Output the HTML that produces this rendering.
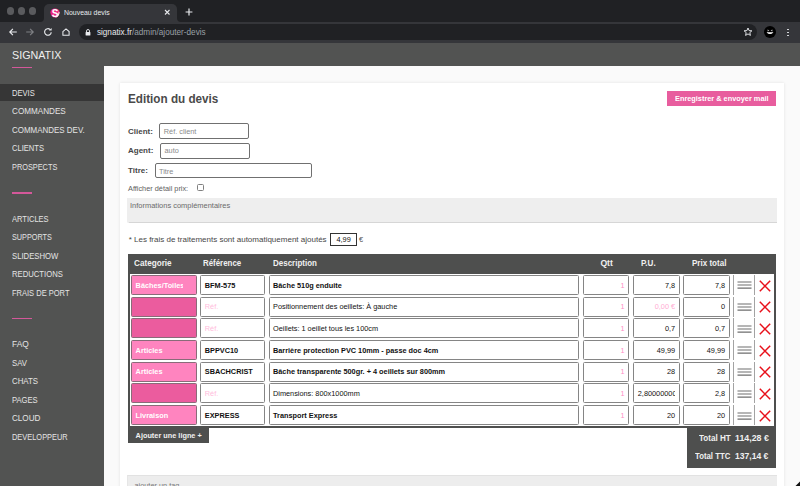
<!DOCTYPE html>
<html><head><meta charset="utf-8">
<style>
*{margin:0;padding:0;box-sizing:border-box}
html,body{width:800px;height:486px;overflow:hidden;background:#fafafa;font-family:"Liberation Sans",sans-serif}
.a{position:absolute;white-space:nowrap}
.r{position:absolute}
</style></head><body>
<div class="r" style="left:0.00px;top:0.00px;width:800.00px;height:21.70px;background:#202124"></div>
<div class="r" style="left:6.80px;top:7.20px;width:7.40px;height:7.40px;background:#5a5b5e;border-radius:50%"></div>
<div class="r" style="left:17.90px;top:7.20px;width:7.40px;height:7.40px;background:#5a5b5e;border-radius:50%"></div>
<div class="r" style="left:29.00px;top:7.20px;width:7.40px;height:7.40px;background:#5a5b5e;border-radius:50%"></div>
<div class="r" style="left:0.00px;top:21.70px;width:800.00px;height:21.10px;background:#35363a"></div>
<div class="r" style="left:44.00px;top:3.60px;width:132.60px;height:18.40px;background:#35363a;border-radius:5px 5px 0 0"></div>
<div class="r" style="left:40.00px;top:17.00px;width:4.00px;height:4.70px;background:#35363a"></div>
<div class="r" style="left:39.00px;top:13.00px;width:5.00px;height:8.70px;background:#202124;border-radius:0 0 4px 0"></div>
<div class="r" style="left:176.60px;top:17.00px;width:4.40px;height:4.70px;background:#35363a"></div>
<div class="r" style="left:176.60px;top:13.00px;width:5.40px;height:8.70px;background:#202124;border-radius:0 0 0 4px"></div>
<svg class="r" style="left:49.5px;top:7.6px" width="10" height="10" viewBox="0 0 10 10"><path d="M5 0.4C7.6 0.4 9.6 1.6 9.6 4.2C9.6 7.2 7.4 9.6 5 9.6C2.6 9.6 0.4 7.2 0.4 4.2C0.4 1.6 2.4 0.4 5 0.4Z" fill="#e8237f"/><path d="M9.6 4.2C9.6 7.2 7.4 9.6 5 9.6C6.8 8.6 8.4 6.6 8.6 3.4Z" fill="#fbe3ee"/><text x="5.1" y="8.6" font-family="Liberation Sans" font-weight="bold" font-size="10" fill="#fff" text-anchor="middle">S</text></svg>
<div class="a" style="left:63.50px;top:9px;font-size:7.1px;line-height:9.23px;color:#e8eaed;transform:scaleX(0.975);transform-origin:0 0;">Nouveau devis</div>
<svg class="r" style="left:163.8px;top:9.4px" width="6.5" height="6.5" viewBox="0 0 6.5 6.5"><path d="M1 1L5.5 5.5M5.5 1L1 5.5" stroke="#e8eaed" stroke-width="1.1"/></svg>
<svg class="r" style="left:184.6px;top:8.4px" width="8" height="8" viewBox="0 0 8 8"><path d="M4 0.6V7.4M0.6 4H7.4" stroke="#e8eaed" stroke-width="1.2"/></svg>
<svg class="r" style="left:7.5px;top:27px" width="10" height="10" viewBox="0 0 10 10"><path d="M8.8 5H2M4.9 1.9L1.8 5L4.9 8.1" stroke="#e8eaed" stroke-width="1.15" fill="none"/></svg>
<svg class="r" style="left:25px;top:27px" width="10" height="10" viewBox="0 0 10 10"><path d="M1.2 5H8M5.1 1.9L8.2 5L5.1 8.1" stroke="#7f8084" stroke-width="1.15" fill="none"/></svg>
<svg class="r" style="left:42.5px;top:27.3px" width="10" height="10" viewBox="0 0 10 10"><path d="M8.2 5.2A3.3 3.3 0 1 1 7.2 2.6" stroke="#e8eaed" stroke-width="1.15" fill="none"/><path d="M8.6 0.9V3.6H5.9Z" fill="#e8eaed"/></svg>
<svg class="r" style="left:60.6px;top:27.2px" width="10" height="10" viewBox="0 0 10 10"><path d="M1.9 4.6L5 1.9L8.1 4.6V8.3H1.9Z" stroke="#e8eaed" stroke-width="1.05" fill="none" stroke-linejoin="miter"/></svg>
<div class="r" style="left:79.00px;top:24.40px;width:678.00px;height:15.30px;background:#202124;border-radius:8px"></div>
<svg class="r" style="left:85px;top:28.8px" width="6" height="7" viewBox="0 0 6 7"><path d="M1.5 3V2A1.5 1.5 0 0 1 4.5 2V3" stroke="#e8eaed" stroke-width="0.9" fill="none"/><rect x="0.6" y="3" width="4.8" height="3.6" rx="0.5" fill="#e8eaed"/></svg>
<div class="a" style="left:96.90px;top:28px;font-size:8.2px;line-height:10.66px;color:#e8eaed;">signatix.fr<span style="color:#9aa0a6">/admin/ajouter-devis</span></div>
<svg class="r" style="left:742.8px;top:27.3px" width="10" height="10" viewBox="0 0 10 10"><path d="M5 1L6.1 3.6L8.9 3.8L6.8 5.6L7.4 8.4L5 6.9L2.6 8.4L3.2 5.6L1.1 3.8L3.9 3.6Z" stroke="#e8eaed" stroke-width="0.95" fill="none" stroke-linejoin="round"/></svg>
<svg class="r" style="left:764px;top:26.3px" width="12" height="12" viewBox="0 0 12 12"><circle cx="6" cy="6" r="6" fill="#000"/><path d="M2.6 6.6Q6 9.6 9.4 6.6L9 6.2H3Z" fill="#fff"/><path d="M3.6 3.6L5.4 4.6L3.6 5.4Z M8.4 3.6L6.6 4.6L8.4 5.4Z" fill="#bbb"/></svg>
<div class="r" style="left:787.00px;top:28.55px;width:1.60px;height:1.50px;background:#e8eaed;border-radius:50%"></div>
<div class="r" style="left:787.00px;top:31.65px;width:1.60px;height:1.50px;background:#e8eaed;border-radius:50%"></div>
<div class="r" style="left:787.00px;top:34.75px;width:1.60px;height:1.50px;background:#e8eaed;border-radius:50%"></div>
<div class="r" style="left:0.00px;top:42.80px;width:104.00px;height:443.20px;background:#525352"></div>
<div class="r" style="left:104.00px;top:42.80px;width:696.00px;height:23.60px;background:#525352"></div>
<div class="a" style="left:11.60px;top:48px;font-size:11.2px;line-height:14.56px;color:#efefef;transform:scaleX(0.960);transform-origin:0 0;">SIGNATIX</div>
<div class="r" style="left:11.90px;top:66.50px;width:20.10px;height:1.60px;background:#d4589a"></div>
<div class="r" style="left:0.00px;top:83.80px;width:104.00px;height:17.70px;background:#363636"></div>
<div class="a" style="left:11.80px;top:88px;font-size:8.67px;line-height:11.27px;color:#e4e4e4;transform:scaleX(0.874);transform-origin:0 0;">DEVIS</div>
<div class="a" style="left:11.80px;top:106px;font-size:8.67px;line-height:11.27px;color:#e4e4e4;transform:scaleX(0.940);transform-origin:0 0;">COMMANDES</div>
<div class="a" style="left:11.80px;top:125px;font-size:8.67px;line-height:11.27px;color:#e4e4e4;transform:scaleX(0.920);transform-origin:0 0;">COMMANDES DEV.</div>
<div class="a" style="left:11.80px;top:143px;font-size:8.67px;line-height:11.27px;color:#e4e4e4;transform:scaleX(0.875);transform-origin:0 0;">CLIENTS</div>
<div class="a" style="left:11.80px;top:162px;font-size:8.67px;line-height:11.27px;color:#e4e4e4;transform:scaleX(0.848);transform-origin:0 0;">PROSPECTS</div>
<div class="a" style="left:11.80px;top:214px;font-size:8.67px;line-height:11.27px;color:#e4e4e4;transform:scaleX(0.868);transform-origin:0 0;">ARTICLES</div>
<div class="a" style="left:11.80px;top:232px;font-size:8.67px;line-height:11.27px;color:#e4e4e4;transform:scaleX(0.838);transform-origin:0 0;">SUPPORTS</div>
<div class="a" style="left:11.80px;top:251px;font-size:8.67px;line-height:11.27px;color:#e4e4e4;transform:scaleX(0.893);transform-origin:0 0;">SLIDESHOW</div>
<div class="a" style="left:11.80px;top:269px;font-size:8.67px;line-height:11.27px;color:#e4e4e4;transform:scaleX(0.888);transform-origin:0 0;">REDUCTIONS</div>
<div class="a" style="left:11.80px;top:288px;font-size:8.67px;line-height:11.27px;color:#e4e4e4;transform:scaleX(0.868);transform-origin:0 0;">FRAIS DE PORT</div>
<div class="a" style="left:11.80px;top:339px;font-size:8.67px;line-height:11.27px;color:#e4e4e4;transform:scaleX(0.969);transform-origin:0 0;">FAQ</div>
<div class="a" style="left:11.80px;top:358px;font-size:8.67px;line-height:11.27px;color:#e4e4e4;transform:scaleX(0.899);transform-origin:0 0;">SAV</div>
<div class="a" style="left:11.80px;top:376px;font-size:8.67px;line-height:11.27px;color:#e4e4e4;transform:scaleX(0.909);transform-origin:0 0;">CHATS</div>
<div class="a" style="left:11.80px;top:395px;font-size:8.67px;line-height:11.27px;color:#e4e4e4;transform:scaleX(0.880);transform-origin:0 0;">PAGES</div>
<div class="a" style="left:11.80px;top:413px;font-size:8.67px;line-height:11.27px;color:#e4e4e4;transform:scaleX(0.937);transform-origin:0 0;">CLOUD</div>
<div class="a" style="left:11.80px;top:432px;font-size:8.67px;line-height:11.27px;color:#e4e4e4;transform:scaleX(0.858);transform-origin:0 0;">DEVELOPPEUR</div>
<div class="r" style="left:11.90px;top:192.10px;width:20.10px;height:1.60px;background:#d4589a"></div>
<div class="r" style="left:11.90px;top:317.80px;width:20.10px;height:1.60px;background:#d4589a"></div>
<div class="r" style="left:120.00px;top:82.70px;width:664.40px;height:417.30px;background:#fff;box-shadow:0 0 3px rgba(0,0,0,0.10)"></div>
<div class="a" style="left:128.10px;top:92px;font-size:12px;line-height:15.6px;color:#4a4a4a;font-weight:bold;transform:scaleX(0.975);transform-origin:0 0;">Edition du devis</div>
<div class="r" style="left:666.80px;top:90.50px;width:109.20px;height:15.80px;background:#e85d9e"></div>
<div class="a" style="left:674.60px;top:94px;font-size:7.5px;line-height:9.75px;color:#ffffff;font-weight:bold;transform:scaleX(0.980);transform-origin:0 0;">Enregistrer &amp; envoyer mail</div>
<div class="a" style="left:128.00px;top:127px;font-size:8px;line-height:10.4px;color:#474747;font-weight:bold;">Client:</div>
<div class="r" style="left:159.40px;top:123.20px;width:89.30px;height:16.00px;border:1.1px solid #707070;border-radius:2px;background:#fff"></div>
<div class="a" style="left:163.80px;top:127px;font-size:7.33px;line-height:9.53px;color:#8a8a8a;">Réf. client</div>
<div class="a" style="left:128.00px;top:146px;font-size:8px;line-height:10.4px;color:#474747;font-weight:bold;">Agent:</div>
<div class="r" style="left:160.30px;top:142.80px;width:89.30px;height:16.00px;border:1.1px solid #707070;border-radius:2px;background:#fff"></div>
<div class="a" style="left:164.50px;top:146px;font-size:7.33px;line-height:9.53px;color:#8a8a8a;">auto</div>
<div class="a" style="left:128.00px;top:166px;font-size:8px;line-height:10.4px;color:#474747;font-weight:bold;">Titre:</div>
<div class="r" style="left:155.00px;top:162.80px;width:156.80px;height:15.30px;border:1.1px solid #707070;border-radius:2px;background:#fff"></div>
<div class="a" style="left:159.00px;top:167px;font-size:7.33px;line-height:9.53px;color:#8a8a8a;">Titre</div>
<div class="a" style="left:128.00px;top:184px;font-size:7.33px;line-height:9.53px;color:#5e5e5e;">Afficher détail prix:</div>
<div class="r" style="left:196.50px;top:184.30px;width:7.10px;height:6.70px;border:1px solid #808080;border-radius:1.5px;background:#fff"></div>
<div class="r" style="left:127.00px;top:198.20px;width:649.60px;height:24.30px;background:#eeeeee;box-shadow:0.4px 0.8px 1px rgba(0,0,0,0.16)"></div>
<div class="a" style="left:130.20px;top:201px;font-size:7.33px;line-height:9.53px;color:#6a6a6a;transform:scaleX(1.020);transform-origin:0 0;">Informations complémentaires</div>
<div class="a" style="left:128.70px;top:235px;font-size:8px;line-height:10.4px;color:#474747;">* Les frais de traitements sont automatiquement ajoutés</div>
<div class="r" style="left:330.00px;top:233.00px;width:27.00px;height:13.00px;border:1px solid #333;background:#fff"></div>
<div class="a" style="left:336.50px;top:235px;font-size:7.33px;line-height:9.53px;color:#111;">4,99</div>
<div class="a" style="left:359.00px;top:235px;font-size:7.33px;line-height:9.53px;color:#555;">€</div>
<div class="r" style="left:128.00px;top:253.80px;width:648.00px;height:19.80px;background:#4e4f4e"></div>
<div class="r" style="left:128.00px;top:273.00px;width:1.70px;height:154.50px;background:#4e4f4e"></div>
<div class="r" style="left:774.30px;top:273.00px;width:1.70px;height:154.50px;background:#4e4f4e"></div>
<div class="r" style="left:128.00px;top:425.90px;width:648.00px;height:1.70px;background:#4e4f4e"></div>
<div class="a" style="left:133.50px;top:258px;font-size:8.67px;line-height:11.27px;color:#f0f0f0;font-weight:bold;transform:scaleX(0.943);transform-origin:0 0;">Categorie</div>
<div class="a" style="left:202.90px;top:258px;font-size:8.67px;line-height:11.27px;color:#f0f0f0;font-weight:bold;transform:scaleX(0.912);transform-origin:0 0;">Référence</div>
<div class="a" style="left:272.80px;top:258px;font-size:8.67px;line-height:11.27px;color:#f0f0f0;font-weight:bold;transform:scaleX(0.922);transform-origin:0 0;">Description</div>
<div class="a" style="left:600.40px;top:258px;font-size:8.67px;line-height:11.27px;color:#f0f0f0;font-weight:bold;transform:scaleX(1.000);transform-origin:0 0;">Qtt</div>
<div class="a" style="left:641.10px;top:258px;font-size:8.67px;line-height:11.27px;color:#f0f0f0;font-weight:bold;transform:scaleX(0.930);transform-origin:0 0;">P.U.</div>
<div class="a" style="left:692.20px;top:258px;font-size:8.67px;line-height:11.27px;color:#f0f0f0;font-weight:bold;transform:scaleX(0.928);transform-origin:0 0;">Prix total</div>
<div class="r" style="left:130.60px;top:275.05px;width:66.20px;height:19.90px;background:#ff84bf;border:1px solid #8a6b79;border-radius:1.5px"></div>
<div class="r" style="left:131.60px;top:0px;width:51.60px;height:486px;overflow:hidden"><div class="a" style="left:4.00px;top:281px;font-size:7.33px;line-height:9.53px;color:#fff;font-weight:bold;">Bâches/Toiles</div>
</div>
<div class="r" style="left:199.90px;top:275.05px;width:65.10px;height:19.90px;background:#fff;border:1px solid #858585;border-radius:1.5px"></div>
<div class="r" style="left:268.60px;top:275.05px;width:310.70px;height:19.90px;background:#fff;border:1px solid #858585;border-radius:1.5px"></div>
<div class="r" style="left:583.20px;top:275.05px;width:46.20px;height:19.90px;background:#fff;border:1px solid #858585;border-radius:1.5px"></div>
<div class="r" style="left:633.20px;top:275.05px;width:46.60px;height:19.90px;background:#fff;border:1px solid #858585;border-radius:1.5px"></div>
<div class="r" style="left:683.40px;top:275.05px;width:46.20px;height:19.90px;background:#fff;border:1px solid #858585;border-radius:1.5px"></div>
<div class="a" style="left:204.80px;top:281px;font-size:7.33px;line-height:9.53px;color:#111;font-weight:bold;">BFM-575</div>
<div class="a" style="left:273.00px;top:281px;font-size:7.33px;line-height:9.53px;color:#111;font-weight:bold;">Bâche 510g enduite</div>
<div class="a" style="right:175.50px;top:281px;font-size:7.33px;line-height:9.53px;color:#ff90c6;">1</div>
<div class="a" style="right:124.90px;top:281px;font-size:7.33px;line-height:9.53px;color:#111;">7,8</div>
<div class="a" style="right:74.90px;top:281px;font-size:7.33px;line-height:9.53px;color:#111;">7,8</div>
<div class="r" style="left:733.10px;top:275.05px;width:1.00px;height:19.90px;background:#a3a3a3"></div>
<div class="r" style="left:753.80px;top:275.05px;width:1.00px;height:19.90px;background:#a3a3a3"></div>
<svg class="r" style="left:736.5px;top:280.45px" width="15" height="10" viewBox="0 0 15 10"><path d="M0.5 1.9H14.5M0.5 5H14.5M0.5 8.1H14.5" stroke="#6e6e6e" stroke-width="1.05"/></svg>
<svg class="r" style="left:758.5px;top:279.65px" width="12" height="12" viewBox="0 0 12 12"><path d="M0.8 0.8L11.2 11.2M11.2 0.8L0.8 11.2" stroke="#e8101a" stroke-width="1.5"/></svg>
<div class="r" style="left:130.60px;top:296.73px;width:66.20px;height:19.90px;background:#eb5c9e;border:1px solid #8a6b79;border-radius:1.5px"></div>
<div class="r" style="left:199.90px;top:296.73px;width:65.10px;height:19.90px;background:#fff;border:1px solid #858585;border-radius:1.5px"></div>
<div class="r" style="left:268.60px;top:296.73px;width:310.70px;height:19.90px;background:#fff;border:1px solid #858585;border-radius:1.5px"></div>
<div class="r" style="left:583.20px;top:296.73px;width:46.20px;height:19.90px;background:#fff;border:1px solid #858585;border-radius:1.5px"></div>
<div class="r" style="left:633.20px;top:296.73px;width:46.60px;height:19.90px;background:#fff;border:1px solid #858585;border-radius:1.5px"></div>
<div class="r" style="left:683.40px;top:296.73px;width:46.20px;height:19.90px;background:#fff;border:1px solid #858585;border-radius:1.5px"></div>
<div class="a" style="left:204.80px;top:302px;font-size:7.33px;line-height:9.53px;color:#ffbddc;">Réf.</div>
<div class="a" style="left:273.00px;top:302px;font-size:7.33px;line-height:9.53px;color:#111;">Positionnement des oeillets: À gauche</div>
<div class="a" style="right:175.50px;top:302px;font-size:7.33px;line-height:9.53px;color:#ff90c6;">1</div>
<div class="a" style="right:124.90px;top:302px;font-size:7.33px;line-height:9.53px;color:#ffadd3;">0,00 €</div>
<div class="a" style="right:74.90px;top:302px;font-size:7.33px;line-height:9.53px;color:#111;">0</div>
<div class="r" style="left:733.10px;top:296.73px;width:1.00px;height:19.90px;background:#a3a3a3"></div>
<div class="r" style="left:753.80px;top:296.73px;width:1.00px;height:19.90px;background:#a3a3a3"></div>
<svg class="r" style="left:736.5px;top:302.12px" width="15" height="10" viewBox="0 0 15 10"><path d="M0.5 1.9H14.5M0.5 5H14.5M0.5 8.1H14.5" stroke="#6e6e6e" stroke-width="1.05"/></svg>
<svg class="r" style="left:758.5px;top:301.33px" width="12" height="12" viewBox="0 0 12 12"><path d="M0.8 0.8L11.2 11.2M11.2 0.8L0.8 11.2" stroke="#e8101a" stroke-width="1.5"/></svg>
<div class="r" style="left:130.60px;top:318.40px;width:66.20px;height:19.90px;background:#eb5c9e;border:1px solid #8a6b79;border-radius:1.5px"></div>
<div class="r" style="left:199.90px;top:318.40px;width:65.10px;height:19.90px;background:#fff;border:1px solid #858585;border-radius:1.5px"></div>
<div class="r" style="left:268.60px;top:318.40px;width:310.70px;height:19.90px;background:#fff;border:1px solid #858585;border-radius:1.5px"></div>
<div class="r" style="left:583.20px;top:318.40px;width:46.20px;height:19.90px;background:#fff;border:1px solid #858585;border-radius:1.5px"></div>
<div class="r" style="left:633.20px;top:318.40px;width:46.60px;height:19.90px;background:#fff;border:1px solid #858585;border-radius:1.5px"></div>
<div class="r" style="left:683.40px;top:318.40px;width:46.20px;height:19.90px;background:#fff;border:1px solid #858585;border-radius:1.5px"></div>
<div class="a" style="left:204.80px;top:324px;font-size:7.33px;line-height:9.53px;color:#ffbddc;">Réf.</div>
<div class="a" style="left:273.00px;top:324px;font-size:7.33px;line-height:9.53px;color:#111;">Oeillets: 1 oeillet tous les 100cm</div>
<div class="a" style="right:175.50px;top:324px;font-size:7.33px;line-height:9.53px;color:#ff90c6;">1</div>
<div class="a" style="right:124.90px;top:324px;font-size:7.33px;line-height:9.53px;color:#111;">0,7</div>
<div class="a" style="right:74.90px;top:324px;font-size:7.33px;line-height:9.53px;color:#111;">0,7</div>
<div class="r" style="left:733.10px;top:318.40px;width:1.00px;height:19.90px;background:#a3a3a3"></div>
<div class="r" style="left:753.80px;top:318.40px;width:1.00px;height:19.90px;background:#a3a3a3"></div>
<svg class="r" style="left:736.5px;top:323.80px" width="15" height="10" viewBox="0 0 15 10"><path d="M0.5 1.9H14.5M0.5 5H14.5M0.5 8.1H14.5" stroke="#6e6e6e" stroke-width="1.05"/></svg>
<svg class="r" style="left:758.5px;top:323.00px" width="12" height="12" viewBox="0 0 12 12"><path d="M0.8 0.8L11.2 11.2M11.2 0.8L0.8 11.2" stroke="#e8101a" stroke-width="1.5"/></svg>
<div class="r" style="left:130.60px;top:340.08px;width:66.20px;height:19.90px;background:#ff84bf;border:1px solid #8a6b79;border-radius:1.5px"></div>
<div class="r" style="left:131.60px;top:0px;width:51.60px;height:486px;overflow:hidden"><div class="a" style="left:4.00px;top:346px;font-size:7.33px;line-height:9.53px;color:#fff;font-weight:bold;">Articles</div>
</div>
<div class="r" style="left:199.90px;top:340.08px;width:65.10px;height:19.90px;background:#fff;border:1px solid #858585;border-radius:1.5px"></div>
<div class="r" style="left:268.60px;top:340.08px;width:310.70px;height:19.90px;background:#fff;border:1px solid #858585;border-radius:1.5px"></div>
<div class="r" style="left:583.20px;top:340.08px;width:46.20px;height:19.90px;background:#fff;border:1px solid #858585;border-radius:1.5px"></div>
<div class="r" style="left:633.20px;top:340.08px;width:46.60px;height:19.90px;background:#fff;border:1px solid #858585;border-radius:1.5px"></div>
<div class="r" style="left:683.40px;top:340.08px;width:46.20px;height:19.90px;background:#fff;border:1px solid #858585;border-radius:1.5px"></div>
<div class="a" style="left:204.80px;top:346px;font-size:7.33px;line-height:9.53px;color:#111;font-weight:bold;">BPPVC10</div>
<div class="a" style="left:273.00px;top:346px;font-size:7.33px;line-height:9.53px;color:#111;font-weight:bold;">Barrière protection PVC 10mm - passe doc 4cm</div>
<div class="a" style="right:175.50px;top:346px;font-size:7.33px;line-height:9.53px;color:#ff90c6;">1</div>
<div class="a" style="right:124.90px;top:346px;font-size:7.33px;line-height:9.53px;color:#111;">49,99</div>
<div class="a" style="right:74.90px;top:346px;font-size:7.33px;line-height:9.53px;color:#111;">49,99</div>
<div class="r" style="left:733.10px;top:340.08px;width:1.00px;height:19.90px;background:#a3a3a3"></div>
<div class="r" style="left:753.80px;top:340.08px;width:1.00px;height:19.90px;background:#a3a3a3"></div>
<svg class="r" style="left:736.5px;top:345.48px" width="15" height="10" viewBox="0 0 15 10"><path d="M0.5 1.9H14.5M0.5 5H14.5M0.5 8.1H14.5" stroke="#6e6e6e" stroke-width="1.05"/></svg>
<svg class="r" style="left:758.5px;top:344.68px" width="12" height="12" viewBox="0 0 12 12"><path d="M0.8 0.8L11.2 11.2M11.2 0.8L0.8 11.2" stroke="#e8101a" stroke-width="1.5"/></svg>
<div class="r" style="left:130.60px;top:361.75px;width:66.20px;height:19.90px;background:#ff84bf;border:1px solid #8a6b79;border-radius:1.5px"></div>
<div class="r" style="left:131.60px;top:0px;width:51.60px;height:486px;overflow:hidden"><div class="a" style="left:4.00px;top:367px;font-size:7.33px;line-height:9.53px;color:#fff;font-weight:bold;">Articles</div>
</div>
<div class="r" style="left:199.90px;top:361.75px;width:65.10px;height:19.90px;background:#fff;border:1px solid #858585;border-radius:1.5px"></div>
<div class="r" style="left:268.60px;top:361.75px;width:310.70px;height:19.90px;background:#fff;border:1px solid #858585;border-radius:1.5px"></div>
<div class="r" style="left:583.20px;top:361.75px;width:46.20px;height:19.90px;background:#fff;border:1px solid #858585;border-radius:1.5px"></div>
<div class="r" style="left:633.20px;top:361.75px;width:46.60px;height:19.90px;background:#fff;border:1px solid #858585;border-radius:1.5px"></div>
<div class="r" style="left:683.40px;top:361.75px;width:46.20px;height:19.90px;background:#fff;border:1px solid #858585;border-radius:1.5px"></div>
<div class="a" style="left:204.80px;top:367px;font-size:7.33px;line-height:9.53px;color:#111;font-weight:bold;">SBACHCRIST</div>
<div class="a" style="left:273.00px;top:367px;font-size:7.33px;line-height:9.53px;color:#111;font-weight:bold;">Bâche transparente 500gr. + 4 oeillets sur 800mm</div>
<div class="a" style="right:175.50px;top:367px;font-size:7.33px;line-height:9.53px;color:#ff90c6;">1</div>
<div class="a" style="right:124.90px;top:367px;font-size:7.33px;line-height:9.53px;color:#111;">28</div>
<div class="a" style="right:74.90px;top:367px;font-size:7.33px;line-height:9.53px;color:#111;">28</div>
<div class="r" style="left:733.10px;top:361.75px;width:1.00px;height:19.90px;background:#a3a3a3"></div>
<div class="r" style="left:753.80px;top:361.75px;width:1.00px;height:19.90px;background:#a3a3a3"></div>
<svg class="r" style="left:736.5px;top:367.15px" width="15" height="10" viewBox="0 0 15 10"><path d="M0.5 1.9H14.5M0.5 5H14.5M0.5 8.1H14.5" stroke="#6e6e6e" stroke-width="1.05"/></svg>
<svg class="r" style="left:758.5px;top:366.35px" width="12" height="12" viewBox="0 0 12 12"><path d="M0.8 0.8L11.2 11.2M11.2 0.8L0.8 11.2" stroke="#e8101a" stroke-width="1.5"/></svg>
<div class="r" style="left:130.60px;top:383.43px;width:66.20px;height:19.90px;background:#eb5c9e;border:1px solid #8a6b79;border-radius:1.5px"></div>
<div class="r" style="left:199.90px;top:383.43px;width:65.10px;height:19.90px;background:#fff;border:1px solid #858585;border-radius:1.5px"></div>
<div class="r" style="left:268.60px;top:383.43px;width:310.70px;height:19.90px;background:#fff;border:1px solid #858585;border-radius:1.5px"></div>
<div class="r" style="left:583.20px;top:383.43px;width:46.20px;height:19.90px;background:#fff;border:1px solid #858585;border-radius:1.5px"></div>
<div class="r" style="left:633.20px;top:383.43px;width:46.60px;height:19.90px;background:#fff;border:1px solid #858585;border-radius:1.5px"></div>
<div class="r" style="left:683.40px;top:383.43px;width:46.20px;height:19.90px;background:#fff;border:1px solid #858585;border-radius:1.5px"></div>
<div class="a" style="left:204.80px;top:389px;font-size:7.33px;line-height:9.53px;color:#ffbddc;">Réf.</div>
<div class="a" style="left:273.00px;top:389px;font-size:7.33px;line-height:9.53px;color:#111;">Dimensions: 800x1000mm</div>
<div class="a" style="right:175.50px;top:389px;font-size:7.33px;line-height:9.53px;color:#ff90c6;">1</div>
<div class="r" style="left:634.20px;top:0px;width:41.30px;height:486px;overflow:hidden"><div class="a" style="left:3.60px;top:389px;font-size:7.33px;line-height:9.53px;color:#111;">2,80000000</div>
</div>
<div class="a" style="right:74.90px;top:389px;font-size:7.33px;line-height:9.53px;color:#111;">2,8</div>
<div class="r" style="left:733.10px;top:383.43px;width:1.00px;height:19.90px;background:#a3a3a3"></div>
<div class="r" style="left:753.80px;top:383.43px;width:1.00px;height:19.90px;background:#a3a3a3"></div>
<svg class="r" style="left:736.5px;top:388.82px" width="15" height="10" viewBox="0 0 15 10"><path d="M0.5 1.9H14.5M0.5 5H14.5M0.5 8.1H14.5" stroke="#6e6e6e" stroke-width="1.05"/></svg>
<svg class="r" style="left:758.5px;top:388.03px" width="12" height="12" viewBox="0 0 12 12"><path d="M0.8 0.8L11.2 11.2M11.2 0.8L0.8 11.2" stroke="#e8101a" stroke-width="1.5"/></svg>
<div class="r" style="left:130.60px;top:405.10px;width:66.20px;height:19.90px;background:#ff84bf;border:1px solid #8a6b79;border-radius:1.5px"></div>
<div class="r" style="left:131.60px;top:0px;width:51.60px;height:486px;overflow:hidden"><div class="a" style="left:4.00px;top:411px;font-size:7.33px;line-height:9.53px;color:#fff;font-weight:bold;">Livraison</div>
</div>
<div class="r" style="left:199.90px;top:405.10px;width:65.10px;height:19.90px;background:#fff;border:1px solid #858585;border-radius:1.5px"></div>
<div class="r" style="left:268.60px;top:405.10px;width:310.70px;height:19.90px;background:#fff;border:1px solid #858585;border-radius:1.5px"></div>
<div class="r" style="left:583.20px;top:405.10px;width:46.20px;height:19.90px;background:#fff;border:1px solid #858585;border-radius:1.5px"></div>
<div class="r" style="left:633.20px;top:405.10px;width:46.60px;height:19.90px;background:#fff;border:1px solid #858585;border-radius:1.5px"></div>
<div class="r" style="left:683.40px;top:405.10px;width:46.20px;height:19.90px;background:#fff;border:1px solid #858585;border-radius:1.5px"></div>
<div class="a" style="left:204.80px;top:411px;font-size:7.33px;line-height:9.53px;color:#111;font-weight:bold;">EXPRESS</div>
<div class="a" style="left:273.00px;top:411px;font-size:7.33px;line-height:9.53px;color:#111;font-weight:bold;">Transport Express</div>
<div class="a" style="right:175.50px;top:411px;font-size:7.33px;line-height:9.53px;color:#ff90c6;">1</div>
<div class="a" style="right:124.90px;top:411px;font-size:7.33px;line-height:9.53px;color:#111;">20</div>
<div class="a" style="right:74.90px;top:411px;font-size:7.33px;line-height:9.53px;color:#111;">20</div>
<div class="r" style="left:733.10px;top:405.10px;width:1.00px;height:19.90px;background:#a3a3a3"></div>
<div class="r" style="left:753.80px;top:405.10px;width:1.00px;height:19.90px;background:#a3a3a3"></div>
<svg class="r" style="left:736.5px;top:410.50px" width="15" height="10" viewBox="0 0 15 10"><path d="M0.5 1.9H14.5M0.5 5H14.5M0.5 8.1H14.5" stroke="#6e6e6e" stroke-width="1.05"/></svg>
<svg class="r" style="left:758.5px;top:409.70px" width="12" height="12" viewBox="0 0 12 12"><path d="M0.8 0.8L11.2 11.2M11.2 0.8L0.8 11.2" stroke="#e8101a" stroke-width="1.5"/></svg>
<div class="r" style="left:128.00px;top:425.90px;width:81.00px;height:16.70px;background:#4e4f4e"></div>
<div class="a" style="left:135.60px;top:431px;font-size:7.33px;line-height:9.53px;color:#f0f0f0;font-weight:bold;">Ajouter une ligne +</div>
<div class="r" style="left:686.70px;top:425.90px;width:89.30px;height:41.80px;background:#4e4f4e"></div>
<div class="a" style="left:698.80px;top:433px;font-size:8.67px;line-height:11.27px;color:#f0f0f0;font-weight:bold;transform:scaleX(0.936);transform-origin:0 0;">Total HT</div>
<div class="a" style="left:734.60px;top:433px;font-size:8.67px;line-height:11.27px;color:#f0f0f0;font-weight:bold;transform:scaleX(1.020);transform-origin:0 0;">114,28 €</div>
<div class="a" style="left:695.00px;top:451px;font-size:8.67px;line-height:11.27px;color:#f0f0f0;font-weight:bold;transform:scaleX(0.900);transform-origin:0 0;">Total TTC</div>
<div class="a" style="left:734.60px;top:451px;font-size:8.67px;line-height:11.27px;color:#f0f0f0;font-weight:bold;transform:scaleX(0.990);transform-origin:0 0;">137,14 €</div>
<div class="r" style="left:127.00px;top:474.60px;width:649.50px;height:25.40px;background:#ededed;border-top:1px solid #e2e2e2;border-left:1px solid #e6e6e6"></div>
<div class="a" style="left:134.50px;top:481px;font-size:7.33px;line-height:9.53px;color:#777;">ajouter un tag</div>
<svg class="r" style="left:794px;top:480px" width="6" height="6" viewBox="0 0 6 6"><path d="M6 1.5V6H1.5Z" fill="#111"/></svg>
</body></html>
